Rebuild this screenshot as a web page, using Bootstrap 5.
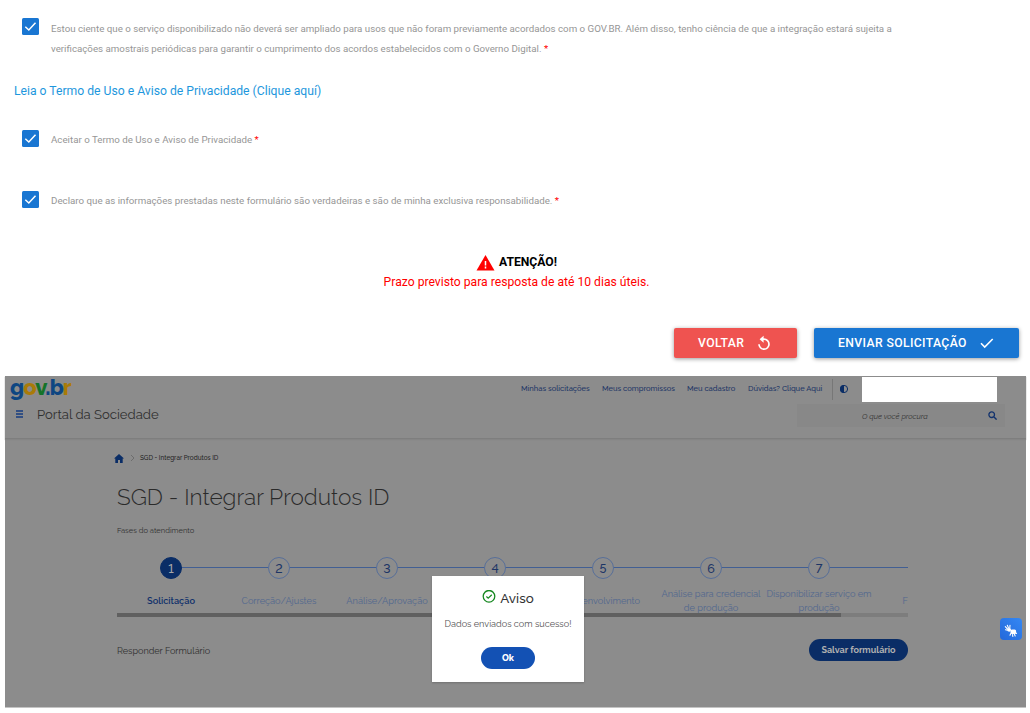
<!DOCTYPE html>
<html lang="pt-BR">
<head>
<meta charset="utf-8">
<title>SGD - Integrar Produtos ID</title>
<link href="https://cdn.jsdelivr.net/npm/bootstrap@5.3.0/dist/css/bootstrap.min.css" rel="stylesheet">
<style>
body{font-family:Roboto,"Liberation Sans",sans-serif;width:1030px;height:713px;overflow:hidden;background:#fff}
.terms{height:376px;padding-top:18px}
.term{padding-left:22px;font-size:9.74px;line-height:20.4px;color:#969696}
.tick{width:17px;height:17px;border-radius:1.5px;background:#1976d2;flex:none;margin-right:12px;display:block}
.term i{color:#f00;font-style:normal}
.t1{height:64px}.t2{height:61px}.t3{height:61px}
.t1 div{padding-top:.7px}
.termlink{height:48px;padding-left:14px;font-size:12.18px;line-height:18px;color:#1e97dd;text-decoration:none}
.alerta{font-size:12.17px;line-height:20px;height:76px;padding-left:3px}
.actions{padding-right:11px;gap:17px}
.mbtn{height:30px;border:0;border-radius:2px;color:#fff;font-size:12.2px;font-weight:500;letter-spacing:.38px;white-space:nowrap;box-shadow:0 1px 4px rgba(0,0,0,.4);padding:0 24px;gap:13px}
.mbtn.red{background:#ef5350;width:123px}.mbtn.blue{background:#1976d2;width:205px}
.mbtn svg{flex:none}
.portal{margin:0 4px 0 5px;height:331px;background:#8c8c8c;font-family:Raleway,Lato,sans-serif;font-feature-settings:"lnum";color:#303030;box-shadow:0 1px 0 #c4c4c4}
.top{height:63px;border-bottom:1px solid #7e7e7e;box-shadow:0 1px 1px #858585}
.row1{height:26px;padding-left:5px}
.logo{font-weight:800;font-size:22px;letter-spacing:-.9px;line-height:22px;width:511px;color:#0e4682}
.logo .y{color:#a97b08}.logo .g{color:#147328}
.quick{font-size:7.55px;font-weight:500;color:#1c3566;line-height:26px;white-space:nowrap}
.row2{height:29px;padding-left:11px;margin-top:-1px}
.nome{margin-left:13px;width:760px;font-size:13.1px;margin-top:-1px}
.busca{width:208px;height:23px;background:#888;font-size:7.5px;font-style:italic;color:#333}
.busca span{padding-top:3px}
.inner{margin-left:112px;width:791px}
.crumb{height:14px;margin-top:12px;margin-left:-3px;font-size:6.35px;font-weight:500;color:#242424}
h1{font-weight:300;font-size:22.6px;line-height:32px;margin:16px 0 0;color:#2a2a2a}
.fases{font-size:7.55px;line-height:14px;margin-top:11px}
.steps{height:56px;margin-top:19px}
.passo{flex:0 0 108px;position:relative;text-align:center;color:#52688f;font-size:9.2px;line-height:13.6px}
.ultimo{flex-basis:35px}
.num{width:22px;height:22px;border:1px solid #586f99;border-radius:50%;margin:0 auto;font-size:12.5px;line-height:22px;color:#1c3566;background:#8c8c8c;position:relative;font-weight:500}
.passo:before{content:"";position:absolute;top:10px;left:0;width:100%;height:1px;background:#425f93}
.passo:first-child:before{left:54px;width:54px}
.ativo{color:#11316b;font-weight:600}.ativo .num{background:#0a2d66;border-color:#0a2d66;color:#a8a8a8}
.rotulo{height:28px;margin-top:8px;white-space:nowrap}
.ultimo .rotulo{margin-top:30px}
.barra{height:4px;background:#7d7d7d}
.barra div{width:724px;height:4px;background:#606060}
.foot{margin-top:22px}
.salvar{width:99px;height:22px;border:0;border-radius:11px;background:#0a2d66;color:#b0b0b0;font-weight:700;font-size:9px;padding:2px 0 0}
.aviso{position:absolute;left:427px;top:200px;width:152px;height:106px;background:#fff;color:#333;text-align:center;box-shadow:0 1px 2px #0003}
.okbtn{width:54px;height:22px;border:0;border-radius:11px;background:#1351b4;color:#fff;font-size:9px;font-weight:800;padding:1px 0 0}
.libras{position:absolute;left:995px;top:242px;width:22px;height:22px;border-radius:4px;background:linear-gradient(45deg,#2468da,#3488f4)}
</style>
</head>
<body>
<svg class="d-none"><symbol id="ck" viewBox="0 0 17 17"><path d="M3.3 8.7 6.8 12 13.5 4.8" fill="none" stroke="#fff" stroke-width="1.5"/></symbol></svg>
<section class="terms">
 <div class="term t1 d-flex"><svg class="tick"><use href="#ck"/></svg><div>Estou ciente que o serviço disponibilizado não deverá ser ampliado para usos que não foram previamente acordados com o GOV.BR. Além disso, tenho ciência de que a integração estará sujeita a<br>verificações amostrais periódicas para garantir o cumprimento dos acordos estabelecidos com o Governo Digital. <i>*</i></div></div>
 <a class="termlink d-block" href="#">Leia o Termo de Uso e Aviso de Privacidade (Clique aquí)</a>
 <div class="term t2 d-flex"><svg class="tick"><use href="#ck"/></svg><div>Aceitar o Termo de Uso e Aviso de Privacidade <i>*</i></div></div>
 <div class="term t3 d-flex"><svg class="tick"><use href="#ck"/></svg><div>Declaro que as informações prestadas neste formulário são verdadeiras e são de minha exclusiva responsabilidade. <i>*</i></div></div>
 <div class="alerta text-center">
  <div class="d-flex justify-content-center align-items-center text-black fw-bold"><svg class="me-1" width="19" height="18" viewBox="0 0 19 18"><path d="M9.5 2 18.5 17.5H.5Z" fill="#f00"/><path d="M9.5 8v4.5M9.5 13.5v2" stroke="#fff" stroke-width="1.5"/></svg>ATENÇÃO!</div>
  <div style="color:red">Prazo previsto para resposta de até 10 dias úteis.</div>
 </div>
 <div class="actions d-flex justify-content-end">
  <button class="mbtn red d-flex align-items-center">VOLTAR <svg width="14" height="16" viewBox="0 0 14 16"><path d="M2 9.2A5 5 0 1 0 7 4.2H4.5" fill="none" stroke="#fff" stroke-width="1.7"/><path d="M6.6 .7v7L2.6 4.2Z" fill="#fff"/></svg></button>
  <button class="mbtn blue d-flex align-items-center">ENVIAR SOLICITAÇÃO <svg width="14" height="12" viewBox="0 0 14 12"><path d="M1 6.3 4.7 10 12.7 2" fill="none" stroke="#fff" stroke-width="1.6"/></svg></button>
 </div>
</section>
<section class="portal position-relative">
 <header class="top">
  <div class="row1 d-flex">
   <div class="logo">g<span class="y">o</span><span class="g">v</span>.b<span class="y">r</span></div>
   <div class="quick d-flex"><span style="width:81px">Minhas solicitações</span><span style="width:85px">Meus compromissos</span><span style="width:61px">Meu cadastro</span><span style="width:84px">Dúvidas? Clique Aqui</span></div>
   <svg width="30" height="26"><path d="M.5 3v21" stroke="#777"/><circle cx="12" cy="13" r="3.6" fill="none" stroke="#0a2d66"/><path d="M12 9a4 4 0 0 0 0 8Z" fill="#0a2d66"/></svg>
   <div class="bg-white" style="width:135px;height:25px;margin-top:1px"></div>
  </div>
  <div class="row2 d-flex align-items-center">
   <svg width="8" height="8" style="margin-top:-4px"><path d="M0 1h7M0 4h7M0 7h7" stroke="#143b80" stroke-width="1.3"/></svg>
   <div class="nome">Portal da Sociedade</div>
   <div class="busca d-flex align-items-center"><span style="margin-left:65px;width:126px">O que você procura</span><svg width="9" height="9"><circle cx="3.7" cy="3.7" r="2.8" fill="none" stroke="#12326d" stroke-width="1.3"/><path d="m6 6 2.6 2.6" stroke="#12326d" stroke-width="1.4"/></svg></div>
  </div>
 </header>
 <div class="inner">
  <div class="crumb d-flex align-items-center"><svg width="10" height="9" viewBox="0 0 10 9"><path d="M5 0 10 4.5H8.7V9H6V6H4V9H1.3V4.5H0Z" fill="#0a2d66"/></svg><svg width="16" height="8"><path d="m7 1 3 3-3 3" fill="none" stroke="#666" stroke-width=".8"/></svg><span>SGD - Integrar Produtos ID</span></div>
  <h1>SGD - Integrar Produtos ID</h1>
  <div class="fases">Fases do atendimento</div>
  <div class="steps d-flex">
   <div class="passo ativo"><div class="num">1</div><div class="rotulo d-flex align-items-center justify-content-center">Solicitação</div></div>
   <div class="passo"><div class="num">2</div><div class="rotulo d-flex align-items-center justify-content-center">Correção/Ajustes</div></div>
   <div class="passo"><div class="num">3</div><div class="rotulo d-flex align-items-center justify-content-center">Análise/Aprovação</div></div>
   <div class="passo"><div class="num">4</div></div>
   <div class="passo"><div class="num">5</div><div class="rotulo d-flex align-items-center justify-content-center">Desenvolvimento</div></div>
   <div class="passo"><div class="num">6</div><div class="rotulo d-flex align-items-center justify-content-center">Análise para credencial<br>de produção</div></div>
   <div class="passo"><div class="num">7</div><div class="rotulo d-flex align-items-center justify-content-center">Disponibilizar serviço em<br>produção</div></div>
   <div class="passo ultimo"><div class="rotulo d-flex align-items-center justify-content-end">F</div></div>
  </div>
  <div class="barra"><div></div></div>
  <div class="foot d-flex justify-content-between align-items-center"><span style="font-size:9.05px;padding-top:2px">Responder Formulário</span><button class="salvar">Salvar formulário</button></div>
 </div>
 <div class="aviso">
  <div class="d-flex justify-content-center align-items-center" style="height:20px;margin-top:11px;font-size:13.4px;font-weight:500"><svg width="14" height="14" class="me-1"><circle cx="7" cy="6.3" r="5.8" fill="none" stroke="#168821" stroke-width="1.3"/><path d="m4.4 6.5 1.8 1.7 3.6-3.4" fill="none" stroke="#168821" stroke-width="1.2"/></svg><span style="padding-top:2px">Aviso</span></div>
  <div style="font-size:9.1px;line-height:14px;margin-top:10px;color:#555">Dados enviados com sucesso!</div>
  <button class="okbtn" style="margin-top:16px">Ok</button>
 </div>
 <div class="libras"><svg width="22" height="22"><g fill="none" stroke="#fff" stroke-linecap="round"><path d="M7.5 9 5.3 6.7M8.5 8 7.3 5.2M9.8 8 10 5.3M7.5 10.3l-2-.6" stroke-width="1.1"/><path d="m12.5 14.5.3 2M14.3 14l.9 2M10.8 13.5l-.8 1.8M15.3 12.5l1.2 1" stroke-width="1.1"/></g><circle cx="9.2" cy="9.8" r="1.9" fill="#fff"/><rect x="10.5" y="9.5" width="5.6" height="4.6" rx="1.5" fill="#fff"/></svg></div>
</section>
<script src="https://cdn.jsdelivr.net/npm/bootstrap@5.3.0/dist/js/bootstrap.bundle.min.js"></script>
</body>
</html>
